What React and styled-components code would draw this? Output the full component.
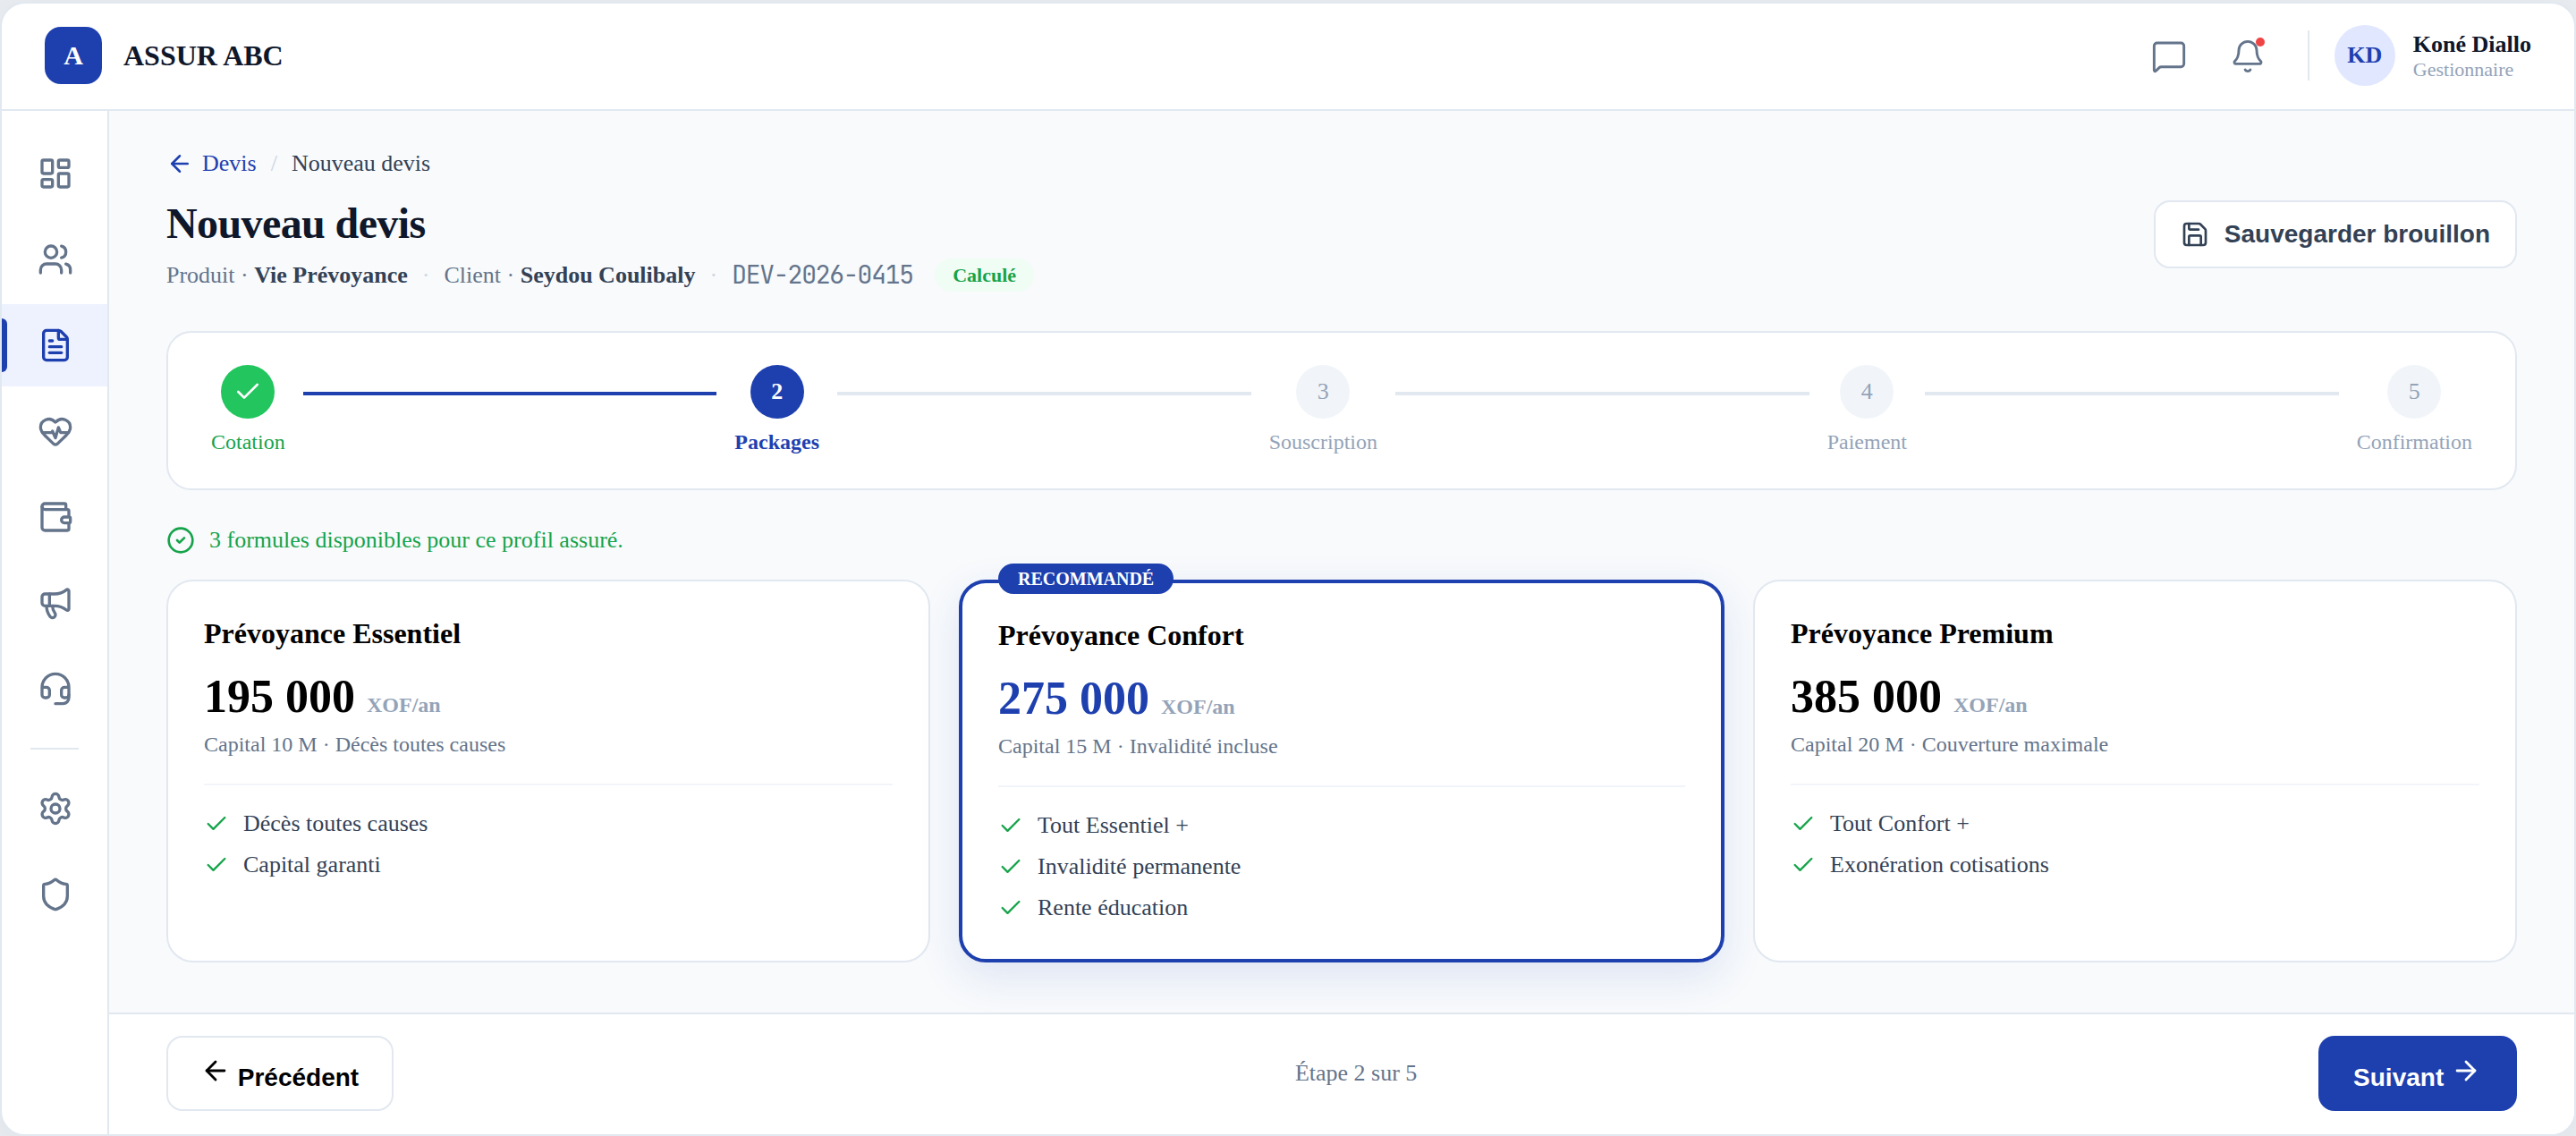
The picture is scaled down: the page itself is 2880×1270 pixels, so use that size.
import React, { useState } from "react";
import styled, { createGlobalStyle } from "styled-components";
import {
	ArrowLeft,
	ArrowRight,
	Bell,
	Check,
	CircleCheck,
	FileText,
	Headset,
	HeartPulse,
	LayoutDashboard,
	Megaphone,
	MessageSquare,
	Save,
	Settings,
	Shield,
	Users,
	Wallet,
} from "lucide-react";

const GlobalStyle = createGlobalStyle`
	* {
		box-sizing: border-box;
	}

	body {
		margin: 0;
		padding-top: 2px;
		background-color: #e9edf2;
		font-family: "Liberation Serif", "Times New Roman", serif;
		font-size: 26px;
		color: #000;
	}

	svg {
		flex-shrink: 0;
	}
`;

const Frame = styled.div`
	height: 1268px;
	display: flex;
	flex-direction: column;
	overflow: hidden;
	background-color: #fff;
	border: 2px solid #e2e8f0;
	border-radius: 28px;
	box-shadow: 0 8px 48px rgba(15, 23, 42, 0.05);
`;

const TopBar = styled.header`
	height: 120px;
	flex-shrink: 0;
	display: flex;
	align-items: center;
	justify-content: space-between;
	padding: 0 48px 2px;
	border-bottom: 2px solid #e2e8f0;
`;

const Brand = styled.div`
	display: flex;
	align-items: center;
	gap: 24px;
	font-size: 32px;
	font-weight: 700;
	color: #0f172a;
`;

const BrandLogo = styled.div`
	width: 64px;
	height: 64px;
	display: flex;
	align-items: center;
	justify-content: center;
	border-radius: 18px;
	background-color: #1e40af;
	color: #fff;
	font-size: 30px;
`;

const TopActions = styled.div`
	display: flex;
	align-items: center;
`;

const IconButton = styled.button`
	position: relative;
	width: 72px;
	height: 72px;
	display: flex;
	align-items: center;
	justify-content: center;
	margin-right: 16px;
	padding: 2px 0 0;
	border: none;
	background: none;
	color: #64748b;
	cursor: pointer;
`;

const BellDot = styled.span`
	position: absolute;
	top: 16px;
	right: 17px;
	width: 10px;
	height: 10px;
	border-radius: 50%;
	background-color: #ef4444;
`;

const TopDivider = styled.div`
	width: 2px;
	height: 56px;
	margin: 0 28px 0 15px;
	background-color: #e2e8f0;
`;

const Avatar = styled.div`
	width: 68px;
	height: 68px;
	display: flex;
	align-items: center;
	justify-content: center;
	margin-right: 20px;
	border-radius: 50%;
	background-color: #e0e7ff;
	color: #1e40af;
	font-weight: 700;
`;

const UserName = styled.div`
	line-height: 30px;
	font-weight: 700;
	color: #0f172a;
`;

const UserRole = styled.div`
	font-size: 22px;
	line-height: 25px;
	color: #94a3b8;
`;

const Body = styled.div`
	flex: 1;
	min-height: 0;
	display: flex;
`;

const Sidebar = styled.nav`
	width: 120px;
	flex-shrink: 0;
	display: flex;
	flex-direction: column;
	gap: 4px;
	padding-top: 24px;
	border-right: 2px solid #e2e8f0;
`;

const NavItem = styled.a`
	position: relative;
	height: 92px;
	display: flex;
	align-items: center;
	justify-content: center;
	padding-left: 2px;
	color: ${(props) => (props.$active ? "#1e40af" : "#64748b")};
	background-color: ${(props) => (props.$active ? "#eef2ff" : "transparent")};

	&::before {
		content: "";
		display: ${(props) => (props.$active ? "block" : "none")};
		position: absolute;
		left: 0;
		top: 16px;
		width: 6px;
		height: 60px;
		border-radius: 0 6px 6px 0;
		background-color: #1e40af;
	}
`;

const NavDivider = styled.div`
	width: 54px;
	height: 2px;
	margin: 16px auto;
	background-color: #e2e8f0;
`;

const Main = styled.main`
	flex: 1;
	display: flex;
	flex-direction: column;
	background-color: #f8fafc;
`;

const Content = styled.div`
	flex: 1;
	padding: 44px 64px 0;
`;

const Breadcrumb = styled.div`
	display: flex;
	align-items: center;
	gap: 16px;
	line-height: 30px;
	color: #334155;
`;

const BackLink = styled.a`
	display: flex;
	align-items: center;
	gap: 10px;
	color: #1e40af;
`;

const Faded = styled.span`
	color: #cbd5e1;
`;

const PageHead = styled.div`
	display: flex;
	align-items: flex-start;
	justify-content: space-between;
	margin: 24px 0 44px;
`;

const PageTitle = styled.h1`
	margin: 0 0 11px;
	font-size: 48px;
	line-height: 56px;
	letter-spacing: -0.6px;
	color: #0f172a;
`;

const Meta = styled.div`
	height: 37px;
	display: flex;
	align-items: center;
	gap: 16px;
	line-height: 30px;
	color: #64748b;

	strong {
		color: #334155;
	}
`;

const QuoteNumber = styled.span`
	width: 203px;
	padding-bottom: 2px;
	font-family: "JetBrains Mono", "Liberation Mono", monospace;
	font-size: 28px;
	letter-spacing: -1.2px;
	white-space: nowrap;
`;

const StatusBadge = styled.span`
	margin-left: 8px;
	padding: 6px 20px;
	border-radius: 20px;
	background-color: #f0fdf4;
	color: #16a34a;
	font-size: 22px;
	font-weight: 700;
	line-height: 25px;
`;

const DraftButton = styled.button`
	height: 76px;
	display: flex;
	align-items: center;
	gap: 17px;
	margin-top: 2px;
	padding: 0 28px;
	border: 2px solid #e2e8f0;
	border-radius: 18px;
	background-color: #fff;
	color: #334155;
	font-family: "Liberation Sans", Arial, sans-serif;
	font-size: 28px;
	font-weight: 700;
`;

const Stepper = styled.div`
	display: flex;
	align-items: flex-start;
	padding: 36px 48px 38px;
	border: 2px solid #e2e8f0;
	border-radius: 28px;
	background-color: #fff;
`;

const stepColors = {
	done: { circle: "#22c55e", number: "#fff", label: "#16a34a" },
	current: { circle: "#1e40af", number: "#fff", label: "#1e40af" },
	todo: { circle: "#f1f5f9", number: "#94a3b8", label: "#94a3b8" },
};

const Step = styled.div`
	display: flex;
	flex-direction: column;
	align-items: center;
	gap: 12px;
	font-weight: ${(props) => (props.$status === "current" ? 700 : 400)};
	color: ${(props) => stepColors[props.$status].label};
`;

const StepCircle = styled.div`
	width: 60px;
	height: 60px;
	display: flex;
	align-items: center;
	justify-content: center;
	border-radius: 50%;
	background-color: ${(props) => stepColors[props.$status].circle};
	color: ${(props) => stepColors[props.$status].number};
`;

const StepLabel = styled.span`
	font-size: 24px;
	line-height: 28px;
`;

const StepLine = styled.div`
	flex: 1;
	height: 4px;
	margin: 30px 20px 0;
	background-color: ${(props) => (props.$done ? "#1e40af" : "#e2e8f0")};
`;

const Notice = styled.div`
	display: flex;
	align-items: center;
	gap: 16px;
	margin: 40px 0 28px;
	line-height: 32px;
	color: #16a34a;
`;

const Plans = styled.div`
	display: grid;
	grid-template-columns: 854fr 856fr 854fr;
	gap: 32px;
`;

const PlanCard = styled.div`
	position: relative;
	padding: 40px 40px 42px;
	border: ${(props) => (props.$recommended ? "4px solid #1e40af" : "2px solid #e2e8f0")};
	border-radius: 30px;
	background-color: #fff;
	box-shadow: ${(props) => (props.$recommended ? "0 16px 48px rgba(30, 64, 175, 0.12)" : "none")};
`;

const PlanTag = styled.span`
	position: absolute;
	top: -22px;
	left: 40px;
	height: 34px;
	padding: 0 22px;
	border-radius: 17px;
	background-color: #1e40af;
	color: #fff;
	font-size: 20px;
	font-weight: 700;
	line-height: 35px;
`;

const PlanName = styled.h2`
	margin: 0 0 24px;
	font-size: 32px;
	line-height: 36px;
`;

const PlanPrice = styled.div`
	margin-bottom: 10px;
	font-size: 52px;
	font-weight: 700;
	line-height: 58px;
	color: ${(props) => (props.$recommended ? "#1e40af" : "#000")};

	small {
		font-size: 24px;
		line-height: 1;
		color: #94a3b8;
	}
`;

const PlanSummary = styled.div`
	padding-bottom: 30px;
	border-bottom: 2px solid #f1f5f9;
	font-size: 24px;
	line-height: 28px;
	color: #64748b;
`;

const PlanFeatures = styled.ul`
	display: flex;
	flex-direction: column;
	gap: 16px;
	margin: 0;
	padding: 28px 0 0;
	list-style: none;

	li {
		display: flex;
		align-items: center;
		gap: 16px;
		line-height: 30px;
		color: #334155;
	}

	svg {
		color: #16a34a;
	}
`;

const Footer = styled.footer`
	display: flex;
	align-items: center;
	justify-content: space-between;
	padding: 24px 64px 26px;
	border-top: 2px solid #e2e8f0;
	background-color: #fff;
	color: #64748b;
`;

const FooterButton = styled.button`
	height: 84px;
	padding: ${(props) => (props.$primary ? "0 40px 0 39px" : "0 37px 0 36px")};
	border: ${(props) => (props.$primary ? "none" : "2px solid #e2e8f0")};
	border-radius: 18px;
	background-color: ${(props) => (props.$primary ? "#1e40af" : "#fff")};
	color: ${(props) => (props.$primary ? "#fff" : "#000")};
	font-family: "Liberation Sans", Arial, sans-serif;
	font-size: 28px;
	font-weight: 700;
	cursor: pointer;
`;

const mainNav = [LayoutDashboard, Users, FileText, HeartPulse, Wallet, Megaphone, Headset];
const adminNav = [Settings, Shield];

const steps = ["Cotation", "Packages", "Souscription", "Paiement", "Confirmation"];

const plans = [
	{
		name: "Prévoyance Essentiel",
		price: "195 000",
		summary: "Capital 10 M · Décès toutes causes",
		features: ["Décès toutes causes", "Capital garanti"],
	},
	{
		name: "Prévoyance Confort",
		price: "275 000",
		summary: "Capital 15 M · Invalidité incluse",
		features: ["Tout Essentiel +", "Invalidité permanente", "Rente éducation"],
		recommended: true,
	},
	{
		name: "Prévoyance Premium",
		price: "385 000",
		summary: "Capital 20 M · Couverture maximale",
		features: ["Tout Confort +", "Exonération cotisations"],
	},
];

function getStatus(index, current) {
	if (index < current) return "done";
	return index === current ? "current" : "todo";
}

function App() {
	const [current, setCurrent] = useState(1);

	return (
		<>
			<GlobalStyle />
			<Frame>
				<TopBar>
					<Brand>
						<BrandLogo>A</BrandLogo>
						ASSUR ABC
					</Brand>
					<TopActions>
						<IconButton>
							<MessageSquare size={40} strokeWidth={1.75} />
						</IconButton>
						<IconButton>
							<Bell size={40} strokeWidth={1.75} />
							<BellDot />
						</IconButton>
						<TopDivider />
						<Avatar>KD</Avatar>
						<div>
							<UserName>Koné Diallo</UserName>
							<UserRole>Gestionnaire</UserRole>
						</div>
					</TopActions>
				</TopBar>
				<Body>
					<Sidebar>
						{mainNav.map((Icon, i) => (
							<NavItem key={i} $active={Icon === FileText}>
								<Icon size={40} />
							</NavItem>
						))}
						<NavDivider />
						{adminNav.map((Icon, i) => (
							<NavItem key={i}>
								<Icon size={40} />
							</NavItem>
						))}
					</Sidebar>
					<Main>
						<Content>
							<Breadcrumb>
								<BackLink>
									<ArrowLeft size={30} />
									Devis
								</BackLink>
								<Faded>/</Faded>
								<span>Nouveau devis</span>
							</Breadcrumb>
							<PageHead>
								<div>
									<PageTitle>Nouveau devis</PageTitle>
									<Meta>
										<span>
											Produit · <strong>Vie Prévoyance</strong>
										</span>
										<Faded>·</Faded>
										<span>
											Client · <strong>Seydou Coulibaly</strong>
										</span>
										<Faded>·</Faded>
										<QuoteNumber>DEV-2026-0415</QuoteNumber>
										<StatusBadge>Calculé</StatusBadge>
									</Meta>
								</div>
								<DraftButton>
									<Save size={32} />
									Sauvegarder brouillon
								</DraftButton>
							</PageHead>
							<Stepper>
								{steps.map((label, i) => {
									const status = getStatus(i, current);
									return (
										<React.Fragment key={label}>
											{i > 0 && <StepLine $done={i <= current} />}
											<Step $status={status}>
												<StepCircle $status={status}>{status === "done" ? <Check size={32} /> : i + 1}</StepCircle>
												<StepLabel>{label}</StepLabel>
											</Step>
										</React.Fragment>
									);
								})}
							</Stepper>
							<Notice>
								<CircleCheck size={32} />
								3 formules disponibles pour ce profil assuré.
							</Notice>
							<Plans>
								{plans.map((plan) => (
									<PlanCard key={plan.name} $recommended={plan.recommended}>
										{plan.recommended && <PlanTag>RECOMMANDÉ</PlanTag>}
										<PlanName>{plan.name}</PlanName>
										<PlanPrice $recommended={plan.recommended}>
											{plan.price} <small>XOF/an</small>
										</PlanPrice>
										<PlanSummary>{plan.summary}</PlanSummary>
										<PlanFeatures>
											{plan.features.map((feature) => (
												<li key={feature}>
													<Check size={28} />
													{feature}
												</li>
											))}
										</PlanFeatures>
									</PlanCard>
								))}
							</Plans>
						</Content>
						<Footer>
							<FooterButton onClick={() => setCurrent((curr) => Math.max(curr - 1, 0))}>
								<ArrowLeft size={34} /> Précédent
							</FooterButton>
							<span>
								Étape {current + 1} sur {steps.length}
							</span>
							<FooterButton $primary onClick={() => setCurrent((curr) => Math.min(curr + 1, steps.length - 1))}>
								Suivant <ArrowRight size={34} />
							</FooterButton>
						</Footer>
					</Main>
				</Body>
			</Frame>
		</>
	);
}

export default App;
